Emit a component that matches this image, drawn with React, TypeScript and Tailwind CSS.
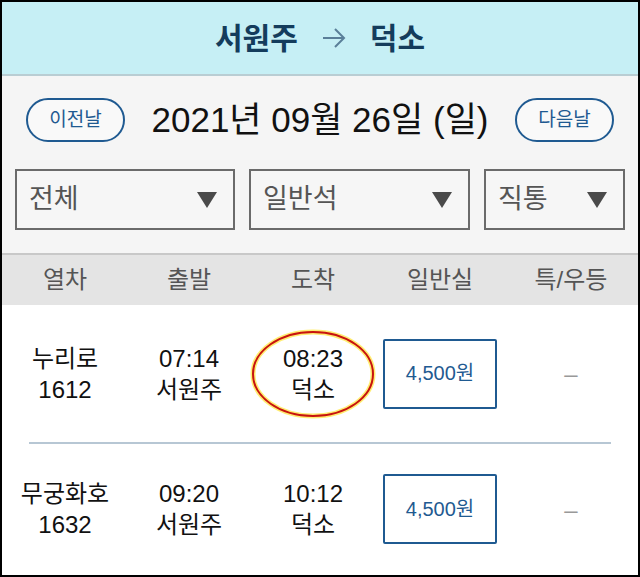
import React from 'react';

const font = { fontFamily: '"Liberation Sans", "Noto Sans CJK KR", sans-serif' };

const trains = [
  { name: '누리로', no: '1612', dep: '07:14', from: '서원주', arr: '08:23', to: '덕소', price: '4,500원', mark: true },
  { name: '무궁화호', no: '1632', dep: '09:20', from: '서원주', arr: '10:12', to: '덕소', price: '4,500원', mark: false },
];

const cols = 'grid grid-cols-[126px_122px_126px_128px_1fr] items-center';

const Select: React.FC<{ label: string; className: string }> = ({ label, className }) => (
  <div className={`h-[61px] border-2 border-[#6b6b6b] bg-[#f6f6f6] flex items-center justify-between pl-3 pr-4 ${className}`}>
    <span className="text-[27px] text-[#555]">{label}</span>
    <svg width="20" height="16" viewBox="0 0 20 16"><path d="M0 0 H20 L10 16 Z" fill="#4a4a4a" /></svg>
  </div>
);

export default function App() {
  return (
    <div style={font} className="w-[640px] h-[577px] border-2 border-black bg-white overflow-hidden flex flex-col">
      {/* route header */}
      <div className="h-[74px] shrink-0 bg-[#c6eff5] border-b-2 border-[#b9cdd3] flex items-center justify-center gap-5 text-[#143c5c]">
        <span className="text-[30px] font-bold">서원주</span>
        <svg width="24" height="22" viewBox="0 0 24 22" className="mx-1">
          <path d="M1 11 H21 M13 2 L22 11 L13 20" stroke="#5a7f99" strokeWidth="2" fill="none" />
        </svg>
        <span className="text-[30px] font-bold">덕소</span>
      </div>

      {/* date + filters */}
      <div className="bg-[#f5f5f5] px-[13px] pt-[22px] pb-[23px] flex flex-col gap-[27px]">
        <div className="h-[44px] flex items-center justify-between px-[11px]">
          <button className="w-[99px] h-[44px] rounded-full border-2 border-[#1f5a91] text-[#1f5a91] text-[19px] bg-white/40">이전날</button>
          <span className="text-[35px] text-[#111]">2021년 09월 26일 (일)</span>
          <button className="w-[99px] h-[44px] rounded-full border-2 border-[#1f5a91] text-[#1f5a91] text-[19px] bg-white/40">다음날</button>
        </div>
        <div className="flex gap-[14px]">
          <Select label="전체" className="w-[220px]" />
          <Select label="일반석" className="w-[221px]" />
          <Select label="직통" className="flex-1" />
        </div>
      </div>

      {/* table header */}
      <div className={`${cols} h-[52px] bg-[#e4e4e4] border-t-2 border-[#c8c8c8] text-[24px] text-[#555] text-center`}>
        <span>열차</span>
        <span>출발</span>
        <span>도착</span>
        <span>일반실</span>
        <span>특/우등</span>
      </div>

      {/* rows */}
      <div className="flex-1 bg-white">
        {trains.map((t, i) => (
          <div key={i} className={i === 0 ? 'border-b-2 border-[#b7c7d4] mx-[27px]' : 'mx-[27px]'}>
            <div className={`${cols} -mx-[27px] text-[24px] text-[#111] text-center leading-[31px] ${i === 0 ? 'h-[137px]' : 'h-[130px]'}`}>
              <div className="flex flex-col">
                <span>{t.name}</span>
                <span>{t.no}</span>
              </div>
              <div className="flex flex-col">
                <span>{t.dep}</span>
                <span>{t.from}</span>
              </div>
              <div className="relative flex flex-col">
                {t.mark && (
                  <svg className="absolute left-1/2 top-1/2 -translate-x-1/2 -translate-y-1/2 overflow-visible" width="126" height="90" viewBox="0 0 126 90">
                    <ellipse cx="63" cy="45" rx="60" ry="42" fill="none" stroke="#ffe94d" strokeWidth="5" opacity="0.8" />
                    <ellipse cx="63" cy="45" rx="60" ry="42" fill="none" stroke="#c8140f" strokeWidth="2" />
                  </svg>
                )}
                <span>{t.arr}</span>
                <span>{t.to}</span>
              </div>
              <div className="flex justify-center">
                <div className="w-[114px] h-[70px] border-2 border-[#1f5a91] rounded-[2px] flex items-center justify-center text-[20px] text-[#1f5a91]">
                  {t.price}
                </div>
              </div>
              <span className="text-[#999]">–</span>
            </div>
          </div>
        ))}
      </div>
    </div>
  );
}
